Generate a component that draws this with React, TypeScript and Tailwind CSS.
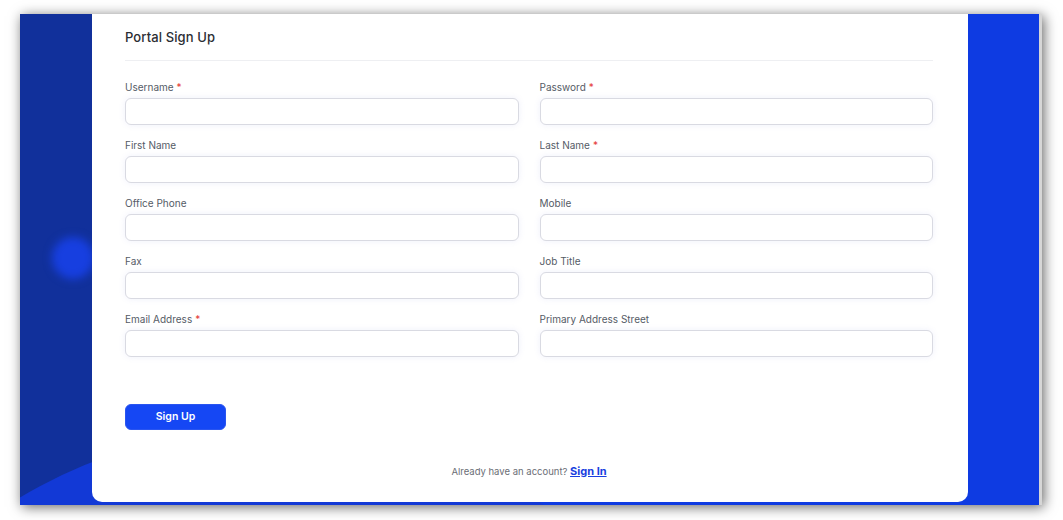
import React from "react";

const rows = [
  [
    { label: "Username", required: true },
    { label: "Password", required: true },
  ],
  [
    { label: "First Name", required: false },
    { label: "Last Name", required: true },
  ],
  [
    { label: "Office Phone", required: false },
    { label: "Mobile", required: false },
  ],
  [
    { label: "Fax", required: false },
    { label: "Job Title", required: false },
  ],
  [
    { label: "Email Address", required: true },
    { label: "Primary Address Street", required: false },
  ],
];

function Field({ label, required }: { label: string; required: boolean }) {
  return (
    <div className="flex flex-col">
      <label className="text-[10px] leading-[14px] text-[#555b66] mb-[4px]">
        {label}
        {required && <span className="text-[#e53935] ml-[3px]">*</span>}
      </label>
      <input
        type={label === "Password" ? "password" : "text"}
        className="h-[27px] w-full rounded-[6px] border border-[#d9dae2] bg-white shadow-[0_0_6px_rgba(120,130,220,0.12)] outline-none"
      />
    </div>
  );
}

export default function App() {
  const fields = rows.flat();

  return (
    <div className="w-[1063px] h-[520px] bg-white overflow-hidden font-['Inter',sans-serif]">
      <div className="ml-[20px] mt-[14px] w-[1022px] h-[491px] flex shadow-[2px_2px_12px_rgba(0,0,0,0.6)]">
        <div className="relative flex-1 bg-[#0e3be2] overflow-hidden">
          {/* background shapes */}
          <div className="absolute left-0 top-0 bottom-0 w-[500px] bg-[#11309b]" />
          <div className="absolute left-[-244px] top-[413px] w-[1000px] h-[1000px] rounded-full bg-[#1239d6]" />
          <div className="absolute left-[32px] top-[223px] w-[42px] h-[42px] rounded-full bg-[#173fe0] blur-[4px]" />

          {/* card */}
          <div className="relative ml-[72px] w-[876px] h-[488px] bg-white rounded-b-[10px] pl-[33px] pr-[35px] pt-[14px]">
            <h1 className="text-[13px] leading-[18px] font-medium text-[#2b2d33] tracking-[0.1px]">
              Portal Sign Up
            </h1>
            <div className="mt-[14px] h-px bg-[#eeeff2]" />

            <div className="mt-[19px] grid grid-cols-2 gap-x-[21px] gap-y-[13px]">
              {fields.map((f) => (
                <Field key={f.label} label={f.label} required={f.required} />
              ))}
            </div>

            <button className="mt-[47px] w-[101px] h-[26px] rounded-[6px] bg-[#1547f4] border border-[#2a55f0] text-white text-[10.5px] font-semibold">
              Sign Up
            </button>

            <p className="mt-[33px] text-center text-[9.5px] leading-[16px] text-[#6b6e76]">
              Already have an account?{" "}
              <a href="#" className="text-[11px] font-bold text-[#1a3fe0] underline">
                Sign In
              </a>
            </p>
          </div>
        </div>
        <div className="w-[3px] bg-[#d6d6d6]" />
      </div>
    </div>
  );
}
